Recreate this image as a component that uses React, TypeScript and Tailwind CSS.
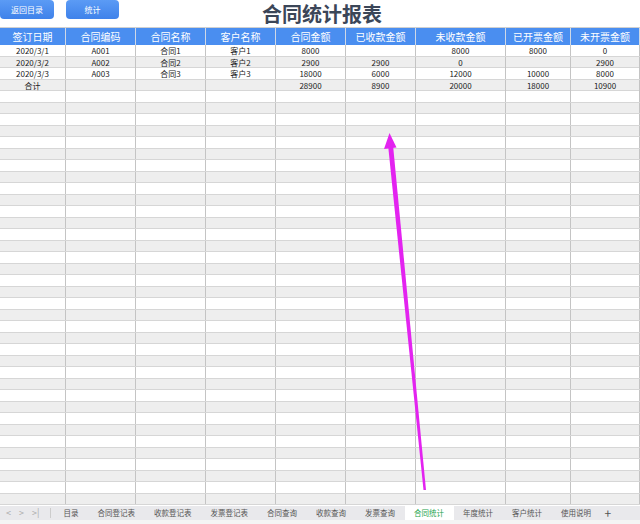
import React from "react";

const cols = ["签订日期", "合同编码", "合同名称", "客户名称", "合同金额", "已收款金额", "未收款金额", "已开票金额", "未开票金额"];
const widths = "grid-cols-[66px_70px_70px_70px_70px_70px_90px_65px_69px]";
const data: string[][] = [
  ["2020/3/1", "A001", "合同1", "客户1", "8000", "", "8000", "8000", "0"],
  ["2020/3/2", "A002", "合同2", "客户2", "2900", "2900", "0", "", "2900"],
  ["2020/3/3", "A003", "合同3", "客户3", "18000", "6000", "12000", "10000", "8000"],
  ["合计", "", "", "", "28900", "8900", "20000", "18000", "10900"],
];
const rows: string[][] = [...data, ...Array.from({ length: 36 }, () => Array(9).fill(""))];
const tabs = ["目录", "合同登记表", "收款登记表", "发票登记表", "合同查询", "收款查询", "发票查询", "合同统计", "年度统计", "客户统计", "使用说明"];

export default function App() {
  return (
    <div className="relative w-[640px] h-[524px] overflow-hidden bg-white flex flex-col" style={{ fontFamily: '"Noto Sans CJK SC", "Noto Sans", sans-serif' }}>
      <div className="relative h-[27px] shrink-0 flex items-start">
        <div className="h-[19px] w-[54px] ml-0 rounded-b-[4px] rounded-tr-[4px] bg-gradient-to-b from-[#5b9bf5] to-[#3f82ea] text-white text-[8px] flex items-center justify-center">返回目录</div>
        <div className="h-[19px] w-[53px] ml-[12px] rounded-b-[4px] rounded-t-[4px] bg-gradient-to-b from-[#5b9bf5] to-[#3f82ea] text-white text-[8px] flex items-center justify-center">统计</div>
        <div className="absolute left-0 right-0 top-[1px] text-center text-[20px] font-bold leading-[26px] text-[#3b4658] pl-[4px]">合同统计报表</div>
      </div>
      <div className={`grid ${widths} h-[18px] bg-[#4a8ef0] border-t border-[#d0d0d0] shrink-0`}>
        {cols.map((c, i) => (
          <div key={i} className="border-r border-[#cfd8e6] text-white text-[10px] leading-[17px] text-center">{c}</div>
        ))}
      </div>
      <div className="flex-1 overflow-hidden">
        {rows.map((r, ri) => (
          <div key={ri} className={`grid ${widths} h-[11.5px] border-b border-[#d6d6d6] ${ri % 2 === 1 ? "bg-[#eeeeee]" : "bg-white"}`}>
            {r.map((v, ci) => (
              <div key={ci} className="border-r border-[#c4c4c4] text-[8px] leading-[11px] text-center text-[#222] whitespace-nowrap">{v}</div>
            ))}
          </div>
        ))}
      </div>
      <div className="h-[18px] shrink-0 bg-[#f4f4f4] flex items-start">
        <div className="h-[14px] w-full bg-[#e9e9ec] flex items-center text-[7.5px] text-[#555] whitespace-nowrap">
          <div className="flex items-center gap-[8px] pl-[6px] w-[50px] text-[#aaa] text-[9px]">
            <span>&lt;</span><span>&gt;</span><span>&gt;|</span>
          </div>
          <div className="w-px h-[10px] bg-[#ccc] mr-[3px]" />
          {tabs.map((t, i) => (
            <div key={i} className={`px-[9.5px] h-[14px] flex items-center shrink-0 ${t === "合同统计" ? "bg-white text-[#1aa34a]" : ""}`}>{t}</div>
          ))}
          <span className="ml-[4px] text-[12px] text-[#555] leading-none">+</span>
        </div>
      </div>
      <svg className="absolute left-0 top-0 pointer-events-none" width="640" height="524">
        <polygon points="423.5,490 426,490 393.2,147 388.3,147.5" fill="#e323f0" />
        <polygon points="389.5,133 384,149 396.5,147.5" fill="#e323f0" />
      </svg>
    </div>
  );
}
